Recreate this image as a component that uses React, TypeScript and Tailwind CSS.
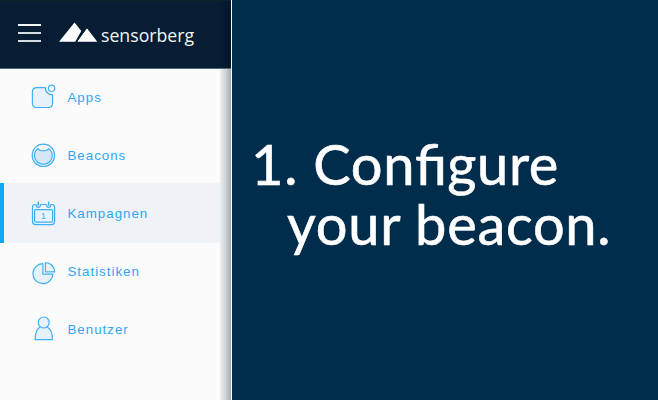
import type { ReactNode } from "react";

function Icon({ children }: { children: ReactNode }) {
  return (
    <svg
      width="30"
      height="30"
      viewBox="0 0 30 30"
      fill="none"
      stroke="#3fb0f5"
      strokeWidth="1.2"
      strokeLinejoin="round"
      strokeLinecap="round"
      className="shrink-0"
    >
      {children}
    </svg>
  );
}

const items: { label: string; active?: boolean; icon: ReactNode }[] = [
  {
    label: "Apps",
    icon: (
      <Icon>
        <path
          d="M17.3 5.6H8.6Q4.4 5.6 4.4 9.8V21.3Q4.4 25.5 8.6 25.5H20.4Q24.6 25.5 24.6 21.3V12.9C20 12.5 17.3 10 17.3 5.6Z"
          fill="#e6f1fa"
        />
        <circle cx="23.600" cy="6.300" r="3.200" />
      </Icon>
    ),
  },
  {
    label: "Beacons",
    icon: (
      <Icon>
        <circle cx="15.400" cy="15.300" r="11.200" />
        <path
          d="M9.800 8.700C11.800 11.400 13.500 10.700 15.300 10.700C17.100 10.700 18.800 11.400 20.800 8.700C22.900 10.300 24.300 12.700 24.300 15.400A8.950 8.950 0 0 1 6.400 15.400C6.400 12.700 7.700 10.300 9.800 8.700Z"
          fill="#d3e7f8"
        />
      </Icon>
    ),
  },
  {
    label: "Kampagnen",
    active: true,
    icon: (
      <Icon>
        <path d="M8 6.500H7Q4.500 6.500 4.500 9.200V23.600Q4.500 26.600 7.500 26.600H23.600Q26.600 26.600 26.600 23.600V9.200Q26.600 6.500 24 6.500H23M8 6.500Q8.200 9.500 10.300 9.500Q12.400 9.500 12.600 6.500H18.400Q18.600 9.500 20.700 9.500Q22.800 9.500 23 6.500" />
        <path d="M10.300 4.300V7.300M20.700 4.300V7.300" strokeWidth="1.600" />
        <rect x="6.600" y="11.600" width="18" height="12.600" rx="1.500" fill="#eaf3fb" />
        <text
          x="15.400"
          y="21.300"
          textAnchor="middle"
          fill="#3fb0f5"
          stroke="none"
          className="font-['Liberation_Sans',sans-serif] text-[9.500px] tracking-normal"
        >
          1
        </text>
      </Icon>
    ),
  },
  {
    label: "Statistiken",
    icon: (
      <Icon>
        <path d="M14.900 7.700A10 10 0 1 0 24.900 18.100H14.900Z" fill="#e6f1fa" />
        <path d="M17.400 6.500A9.500 9.500 0 0 1 26.700 15.800H17.400Z" fill="#e6f1fa" />
      </Icon>
    ),
  },
  {
    label: "Benutzer",
    icon: (
      <Icon>
        <path
          d="M11.900 13.200C8.500 15 7.200 19.500 7.100 25.600H24.500C24.400 19.500 22.900 15 19.500 13.200"
          fill="#e6f1fa"
        />
        <circle cx="15.700" cy="8.500" r="5.500" fill="#e6f1fa" />
      </Icon>
    ),
  },
];

export default function App() {
  return (
    <div className="flex h-[400px] w-[658px] overflow-hidden bg-[#012d4d]">
      <aside className="flex w-[231px] shrink-0 flex-col bg-[#fbfbfc] font-['Liberation_Sans',sans-serif]">
        <header className="flex h-[69px] shrink-0 border-y border-t-[#0d202b] border-b-[#53677f] bg-linear-to-r from-[#061d33] from-95% to-[#03162b] pl-[18px]">
          <button aria-label="Menu" className="mt-[23px] flex h-[18px] w-[23px] flex-col justify-between">
            <span className="h-[2px] w-full bg-[#f4f6f8]" />
            <span className="h-[2px] w-full bg-[#d6dce2]" />
            <span className="h-[2px] w-full bg-[#d6dce2]" />
          </button>
          <svg width="40" height="22" viewBox="0 0 40 22" fill="white" className="mt-[20px] ml-[17px]">
            <path d="M1 20.700L16.500 1.500L23.300 9.900L17.200 20.700Z" />
            <path d="M18.700 20.700L29 6.700L39.500 20.700Z" stroke="#061d33" strokeWidth="1.200" />
            <path d="M19.400 20.700L29 7.400L39.300 20.700Z" />
          </svg>
          <span className="mt-[21px] ml-[3px] font-['Open_Sans',sans-serif] text-[17.700px] leading-[26px] text-[#f2f5f7]">
            sensorberg
          </span>
        </header>
        <div className="flex min-h-0 grow">
          <nav className="flex w-[220px] flex-col">
            {items.map((item) => (
              <a
                key={item.label}
                className={
                  item.active
                    ? "flex h-[60px] items-center border-l-4 border-[#12a5f8] bg-[#eff3f8] pl-[24px] text-[13.300px] tracking-[1px] text-[#2ea6f7]"
                    : "flex h-[56px] items-center pl-[28px] text-[13.300px] tracking-[1px] text-[#2ea6f7] first:mb-[2px] last:mt-[2px]"
                }
              >
                {item.icon}
                <span className="ml-[9.500px] pt-px">{item.label}</span>
              </a>
            ))}
          </nav>
          <div className="w-[11px] bg-linear-to-r from-[#edf0f2] via-[#d0d5d9] to-[#a5abb0]" />
        </div>
      </aside>
      <div className="w-px shrink-0 bg-white" />
      <main className="grow pt-[133px] font-['Lato',sans-serif] text-[56px] leading-[61px] tracking-[0.700px] whitespace-nowrap text-white [-webkit-text-stroke:0.6px_white]">
        <p className="pl-[19px]">
          1. Con<span className="tracking-normal">fi</span>gure
        </p>
        <p className="-mt-px pl-[55px]">your beacon.</p>
      </main>
    </div>
  );
}
